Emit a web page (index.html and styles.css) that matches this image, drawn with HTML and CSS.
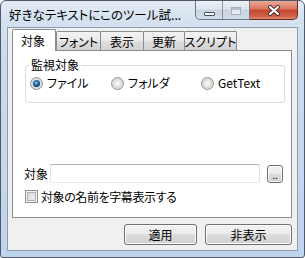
FILE: index.html
```html
<!DOCTYPE html>
<html lang="ja">
<head>
<meta charset="utf-8">
<link rel="stylesheet" href="styles.css">
</head>
<body>
<div class="window">
  <div class="titlebar">
    <span class="title">好きなテキストにこのツール試...</span>
    <div class="caption">
      <div class="cgroup">
        <span class="cbtn min"><span class="min-glyph"></span></span>
        <span class="cbtn max"><span class="max-glyph"></span></span>
      </div>
      <span class="cbtn close">
        <svg width="14" height="11" viewBox="0 0 14 11"><path d="M3 2 L11 9 M11 2 L3 9" stroke="#4a2a26" stroke-width="4" stroke-linecap="round"/><path d="M3 2 L11 9 M11 2 L3 9" stroke="#ffffff" stroke-width="2.2" stroke-linecap="round"/></svg>
      </span>
    </div>
  </div>
  <div class="client">
    <div class="tabstrip">
      <span class="tab sel w44">対象</span>
      <span class="tab w45">フォント</span>
      <span class="tab w44 ov">表示</span>
      <span class="tab w42 ov">更新</span>
      <span class="tab w53 ov">スクリプト</span>
    </div>
    <div class="panel">
      <fieldset class="group">
        <legend>監視対象</legend>
        <div class="radios">
          <label class="ritem"><span class="radio on"></span>ファイル</label>
          <label class="ritem"><span class="radio"></span>フォルダ</label>
          <label class="ritem"><span class="radio"></span>GetText</label>
        </div>
      </fieldset>
      <div class="target-row">
        <span class="tlabel">対象</span>
        <span class="textbox"></span>
        <span class="browse">..</span>
      </div>
      <label class="check-row"><span class="checkbox"></span><span class="ctext">対象の名前を字幕表示する</span></label>
    </div>
    <div class="buttons">
      <span class="btn b1">適用</span>
      <span class="btn b2">非表示</span>
    </div>
  </div>
</div>
</body>
</html>
```

FILE: styles.css
```css
* { box-sizing: border-box; }
html, body { margin: 0; padding: 0; background: #ffffff; }
body {
  font-family: "Noto Sans CJK JP", "Noto Sans", sans-serif;
  font-size: 12px;
  line-height: 14px;
  font-feature-settings: "palt";
  color: #000;
}
.window {
  width: 305px;
  height: 258px;
  border: 1px solid #4e5a68;
  border-radius: 6px 6px 3px 3px;
  background: linear-gradient(180deg, #e3ebf5 0px, #d5e1ef 20px, #c9dbef 60px, #bfd4ed 100%);
  display: flex;
  flex-direction: column;
  overflow: hidden;
}
.titlebar {
  height: 26px;
  display: flex;
  align-items: flex-start;
  padding: 0 6px 0 8px;
}
.title {
  flex: 1;
  padding-top: 6px;
  line-height: 16px;
  font-size: 12.5px;
  white-space: nowrap;
  color: #000;
}
.caption { display: flex; }
.cgroup {
  display: flex;
  width: 55px;
  height: 19px;
  border: 1px solid #6c7889;
  border-top: 0;
  border-radius: 0 0 0 5px;
  overflow: hidden;
  background: linear-gradient(180deg, #eef2f8 0%, #dde5ef 45%, #c8d3e1 50%, #d3dde9 100%);
}
.cbtn {
  display: flex;
  align-items: center;
  justify-content: center;
  height: 19px;
}
.min { width: 27px; border-right: 1px solid #8a96a6; align-items: flex-end; padding-bottom: 4px; }
.max { width: 26px; }
.min-glyph {
  width: 11px; height: 4px;
  background: #fff;
  border: 1px solid #47505c;
  border-radius: 1px;
}
.max-glyph {
  width: 10px; height: 8px;
  border: 1px solid #a4afbd;
  box-shadow: inset 0 2px 0 #b8c2ce;
  background: #e6ebf2;
  margin-top: 1px;
}
.close {
  width: 48px;
  border: 1px solid #6a2d25;
  border-top: 0;
  border-left: 0;
  border-radius: 0 0 5px 0;
  background: linear-gradient(180deg, #e9a898 0%, #d9765f 45%, #c4452e 50%, #d0624a 85%, #e08c72 100%);
}
.client {
  flex: 1;
  margin: 0 6px 6px;
  border: 1px solid #8d9cad;
  background: #f0f0f0;
  display: flex;
  flex-direction: column;
  padding: 1px 5px 5px 4px;
}
.tabstrip {
  height: 21px;
  display: flex;
  align-items: flex-end;
}
.tab {
  height: 19px;
  border: 1px solid #898c95;
  border-bottom: 0;
  border-radius: 2px 2px 0 0;
  background: linear-gradient(180deg, #f3f3f3 0%, #ebebeb 45%, #dddddd 55%, #d2d2d2 100%);
  display: flex;
  align-items: center;
  justify-content: center;
  padding-top: 2px;
  white-space: nowrap;
}
.tab.sel {
  height: 22px;
  margin-bottom: -1px;
  background: #ffffff;
  position: relative;
  z-index: 1;
  padding-top: 0;
  padding-right: 2px;
}
.tab.ov { margin-left: -1px; }
.w44 { width: 44px; }
.w45 { width: 45px; }
.w42 { width: 42px; }
.w53 { width: 53px; }
.panel {
  height: 168px;
  border: 1px solid #898c95;
  background: #ffffff;
  display: flex;
  flex-direction: column;
}
.group {
  margin: 7px 6px 0 12px;
  padding: 0 0 11px 3px;
  border: 1px solid #d5dfe5;
  border-radius: 3px;
  min-width: 0;
}
.group legend {
  padding: 0 2px;
  line-height: 14px;
}
.radios {
  margin: 3px 0 0 1px;
  height: 16px;
  display: grid;
  grid-template-columns: 81px 90px auto;
  align-items: center;
}
.ritem {
  display: flex;
  align-items: center;
  gap: 4px;
  white-space: nowrap;
}
.radio {
  width: 13px;
  height: 13px;
  border-radius: 50%;
  border: 1px solid #8e8f8f;
  background: radial-gradient(circle at 50% 50%, #fafafa 0px, #f0f0f0 2px, #d6d6d6 4.5px, #e8e8e8 5.5px, #f6f6f6 6.5px);
  display: flex;
  align-items: center;
  justify-content: center;
  flex: none;
}
.radio.on::after {
  content: "";
  width: 7px;
  height: 7px;
  border-radius: 50%;
  background: radial-gradient(circle at 45% 40%, #8fd0f5 0px, #3b88c7 1.5px, #1d5b94 3px, #163f66 3.6px);
}
.target-row {
  margin: 61px 0 0 11px;
  height: 19px;
  display: flex;
  align-items: center;
}
.tlabel { width: 24px; margin-right: 2px; white-space: nowrap; }
.textbox {
  width: 210px;
  height: 19px;
  border: 1px solid;
  border-color: #abadb3 #dbdfe6 #e3e9ef #e2e3ea;
  border-radius: 2px;
  background: #fff;
}
.browse {
  margin-left: 7px;
  width: 16px;
  height: 18px;
  border: 1px solid #707070;
  border-radius: 3px;
  background: linear-gradient(180deg, #f2f2f2 0%, #ebebeb 50%, #dddddd 50%, #cfcfcf 100%);
  box-shadow: inset 0 0 0 1px #fbfbfb;
  font-size: 9px;
  line-height: 9px;
  display: flex;
  align-items: flex-end;
  justify-content: center;
  padding-bottom: 2px;
}
.check-row {
  margin: 7px 0 0 12px;
  height: 13px;
  display: flex;
  align-items: center;
  gap: 3px;
  white-space: nowrap;
}
.ctext { letter-spacing: -0.4px; }
.checkbox {
  width: 13px;
  height: 13px;
  border: 1px solid #8e8f8f;
  box-shadow: inset 0 0 0 1px #f4f4f4, inset 0 0 0 2px #aeb3b9;
  background: linear-gradient(135deg, #cbcfd5 0%, #e6e8eb 60%, #f7f7f7 100%);
  flex: none;
}
.buttons {
  margin-top: 6px;
  height: 21px;
  display: flex;
  justify-content: flex-end;
  gap: 8px;
}
.btn {
  height: 21px;
  border: 1px solid #707070;
  border-radius: 3px;
  background: linear-gradient(180deg, #f2f2f2 0%, #ebebeb 50%, #dddddd 50%, #cfcfcf 100%);
  box-shadow: inset 0 0 0 1px #fcfcfc;
  display: flex;
  align-items: center;
  justify-content: center;
}
.b1 { width: 73px; }
.b2 { width: 87px; }
```
